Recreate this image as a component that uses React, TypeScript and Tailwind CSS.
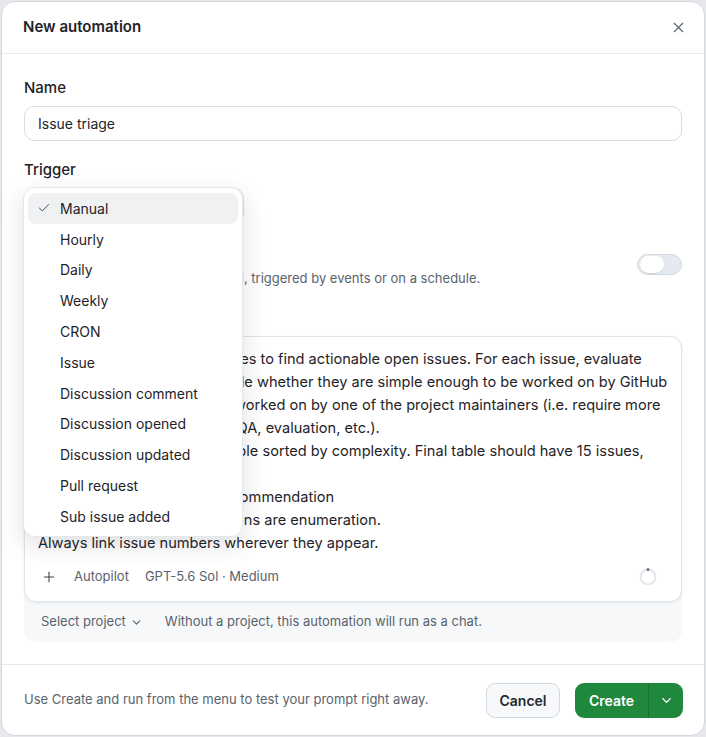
import React from 'react';
import { X, Check, Plus, ChevronDown } from 'lucide-react';

const triggers = [
  'Manual',
  'Hourly',
  'Daily',
  'Weekly',
  'CRON',
  'Issue',
  'Discussion comment',
  'Discussion opened',
  'Discussion updated',
  'Pull request',
  'Sub issue added',
];

const promptLines = [
  'Go through latest GitHub issues to find actionable open issues. For each issue, evaluate',
  'labels and comments to decide whether they are simple enough to be worked on by GitHub',
  'Copilot or if they need to be worked on by one of the project maintainers (i.e. require more',
  'careful judgment, UI design, QA, evaluation, etc.).',
  'Summarize the results in a table sorted by complexity. Final table should have 15 issues,',
  'including these columns:',
  'Issues, Title, Complexity, Recommendation',
  'Ensure that Complexity columns are enumeration.',
  'Always link issue numbers wherever they appear.',
];

const TriggerMenu: React.FC = () => (
  <div className="absolute left-[21px] top-[185px] w-[220px] rounded-xl border border-gray-200 bg-white pt-[5px] pb-1 shadow-[0_8px_24px_rgba(31,35,40,0.14)]">
    {triggers.map((t, i) => (
      <div
        key={t}
        className={`mx-1 flex h-[30.8px] items-center rounded-lg text-[14px] text-[#1f2328] ${i === 0 ? 'bg-[#eff1f3]' : ''}`}
      >
        <span className="flex w-[32px] justify-end pr-[9px]">
          {i === 0 && <Check size={14} strokeWidth={1.6} className="text-[#3d444d]" />}
        </span>
        <span>{t}</span>
      </div>
    ))}
  </div>
);

export default function App() {
  return (
    <div className="min-h-screen bg-[#e6e8eb] p-px font-['Inter','Liberation_Sans',sans-serif]">
      <div className="relative flex h-[735px] flex-col overflow-hidden rounded-[14px] border border-[#d1d9e0] bg-white">
        {/* header */}
        <div className="flex h-[52px] shrink-0 items-center justify-between border-b border-[#e6e9ed] pl-[21px] pr-[17px]">
          <h2 className="text-[15px] font-semibold text-[#1f2328]">New automation</h2>
          <X size={17} strokeWidth={1.6} className="text-[#59636e]" />
        </div>

        {/* body */}
        <div className="flex-1 px-[22px] pt-6">
          <label className="block text-[15px] font-medium leading-5 text-[#1f2328]">Name</label>
          <div className="mt-2 flex h-[35px] items-center rounded-[10px] border border-[#d8dee4] px-[13px] text-[14px] text-[#1f2328]">
            Issue triage
          </div>

          <label className="mt-[19px] block text-[15px] font-medium leading-5 text-[#1f2328]">Trigger</label>
          <div className="mt-2 flex h-[36px] w-[220px] items-center justify-between rounded-[10px] border border-[#d8dee4] px-3 text-[14px] text-[#1f2328]">
            Manual
            <ChevronDown size={14} className="text-[#59636e]" />
          </div>

          <div className="mt-[22px] flex items-start justify-between">
            <div>
              <div className="text-[14px] font-medium leading-5 text-[#1f2328]">Run automatically</div>
              <div className="mt-[3px] text-[13px] leading-[18px] text-[#59636e]">
                Runs this automation in background, triggered by events or on a schedule.
              </div>
            </div>
            <div className="mt-[8px] flex h-[21px] w-[45px] items-center rounded-full border border-[#d1d9e0] bg-[#e6eaef] px-[2px]">
              <div className="h-[17px] w-[24px] rounded-full bg-white shadow-[0_1px_1px_rgba(31,35,40,0.1)]" />
            </div>
          </div>

          <label className="mt-[21px] block text-[15px] font-medium leading-5 text-[#1f2328]">Prompt</label>
          <div className="mt-2 rounded-xl bg-[#f6f8fa]">
            <div className="rounded-xl border border-[#e1e4e8] bg-white px-[13px] pt-[11px] pb-[14px] shadow-[0_1px_3px_rgba(31,35,40,0.08)]">
              <div className="text-[14.6px] leading-[23px] text-[#1f2328]">
                {promptLines.map((l) => (
                  <div key={l} className="whitespace-nowrap">{l}</div>
                ))}
              </div>
              <div className="mt-[12px] flex h-5 items-center text-[13px] text-[#59636e]">
                <Plus size={16} strokeWidth={1.6} className="ml-[3px] text-[#3d444d]" />
                <span className="ml-[17px]">Autopilot</span>
                <span className="ml-4">GPT-5.6 Sol · Medium</span>
                <svg className="ml-auto mr-[11px]" width="18" height="18" viewBox="0 0 18 18" fill="none">
                  <circle cx="9" cy="9" r="7.5" stroke="#e3e7eb" strokeWidth="2" />
                  <circle cx="9" cy="1.6" r="1.4" fill="#59636e" />
                </svg>
              </div>
            </div>
            <div className="flex h-10 items-center px-[17px] text-[13px] text-[#59636e]">
              <span>Select project</span>
              <ChevronDown size={13} className="ml-1" />
              <span className="ml-[22px]">Without a project, this automation will run as a chat.</span>
            </div>
          </div>
        </div>

        {/* footer */}
        <div className="flex h-[71px] shrink-0 items-center justify-between border-t border-[#e6e9ed] pl-[22px] pr-[21px]">
          <span className="text-[13px] text-[#59636e]">Use Create and run from the menu to test your prompt right away.</span>
          <div className="flex items-center gap-[15px]">
            <button className="h-[35px] w-[74px] rounded-[9px] border border-[#d1d9e0] bg-[#f6f8fa] text-[14px] font-semibold text-[#25292e]">
              Cancel
            </button>
            <div className="flex h-[35px] overflow-hidden rounded-[9px] bg-[#1f883d] text-white">
              <button className="w-[73px] text-[14px] font-semibold">Create</button>
              <button className="flex w-[35px] items-center justify-center border-l border-[#1a6f33]">
                <ChevronDown size={15} strokeWidth={2.2} />
              </button>
            </div>
          </div>
        </div>

        <TriggerMenu />
      </div>
    </div>
  );
}
